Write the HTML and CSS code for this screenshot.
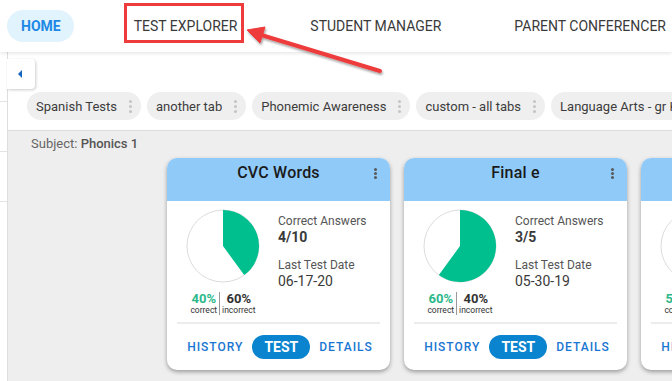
FILE: index.html
```html
<!DOCTYPE html>
<html lang="en">
<head>
    <meta charset="UTF-8">
    <title>Test Explorer</title>
    <link rel="stylesheet" href="styles.css">
</head>
<body>
    <div class="topbar">
        <a class="nav-item active">HOME</a>
        <a class="nav-item">TEST EXPLORER</a>
        <a class="nav-item">STUDENT MANAGER</a>
        <a class="nav-item">PARENT CONFERENCER</a>
    </div>

    <div class="layout">
        <div class="rail">
            <div class="rail-row"></div>
            <div class="rail-row"></div>
            <div class="rail-row"></div>
        </div>

        <div class="main">
            <div class="tabbar">
                <button class="collapse"><span class="tri"></span></button>
                <div class="chips">
                    <div class="chip">Spanish Tests <span class="kebab"></span></div>
                    <div class="chip">another tab <span class="kebab"></span></div>
                    <div class="chip">Phonemic Awareness <span class="kebab"></span></div>
                    <div class="chip">custom - all tabs <span class="kebab"></span></div>
                    <div class="chip">Language Arts - gr K <span class="kebab"></span></div>
                </div>
            </div>

            <div class="content">
                <div class="subject">Subject: <b>Phonics 1</b></div>
                <div class="cards">
                    <div class="card">
                        <div class="card-head">CVC Words <span class="kebab dark"></span></div>
                        <div class="card-body">
                            <div class="chart">
                                <svg width="74" height="74" viewBox="-37 -37 74 74">
                                    <circle r="36" fill="#fff" stroke="#dcdcdc" stroke-width="1"/>
                                    <path d="M0 0 L0 -36 A36 36 0 0 1 21.16 29.12 Z" fill="#00bf8f"/>
                                </svg>
                                <div class="pcts">
                                    <div class="pct"><b class="green">40%</b><span>correct</span></div>
                                    <div class="pct"><b>60%</b><span>incorrect</span></div>
                                </div>
                            </div>
                            <div class="info">
                                <div class="label">Correct Answers</div>
                                <div class="value bold">4/10</div>
                                <div class="label gap">Last Test Date</div>
                                <div class="value">06-17-20</div>
                            </div>
                        </div>
                        <div class="card-actions">
                            <a class="act">HISTORY</a>
                            <a class="act pill">TEST</a>
                            <a class="act">DETAILS</a>
                        </div>
                    </div>

                    <div class="card">
                        <div class="card-head">Final e <span class="kebab dark"></span></div>
                        <div class="card-body">
                            <div class="chart">
                                <svg width="74" height="74" viewBox="-37 -37 74 74">
                                    <circle r="36" fill="#fff" stroke="#dcdcdc" stroke-width="1"/>
                                    <path d="M0 0 L0 -36 A36 36 0 1 1 -21.16 29.12 Z" fill="#00bf8f"/>
                                </svg>
                                <div class="pcts">
                                    <div class="pct"><b class="green">60%</b><span>correct</span></div>
                                    <div class="pct"><b>40%</b><span>incorrect</span></div>
                                </div>
                            </div>
                            <div class="info">
                                <div class="label">Correct Answers</div>
                                <div class="value bold">3/5</div>
                                <div class="label gap">Last Test Date</div>
                                <div class="value">05-30-19</div>
                            </div>
                        </div>
                        <div class="card-actions">
                            <a class="act">HISTORY</a>
                            <a class="act pill">TEST</a>
                            <a class="act">DETAILS</a>
                        </div>
                    </div>

                    <div class="card">
                        <div class="card-head">Blends <span class="kebab dark"></span></div>
                        <div class="card-body">
                            <div class="chart">
                                <svg width="74" height="74" viewBox="-37 -37 74 74">
                                    <circle r="36" fill="#fff" stroke="#dcdcdc" stroke-width="1"/>
                                    <path d="M0 0 L0 -36 A36 36 0 0 1 0 36 Z" fill="#00bf8f"/>
                                </svg>
                                <div class="pcts">
                                    <div class="pct"><b class="green">50%</b><span>correct</span></div>
                                    <div class="pct"><b>50%</b><span>incorrect</span></div>
                                </div>
                            </div>
                            <div class="info">
                                <div class="label">Correct Answers</div>
                                <div class="value bold">5/10</div>
                                <div class="label gap">Last Test Date</div>
                                <div class="value">06-17-20</div>
                            </div>
                        </div>
                        <div class="card-actions">
                            <a class="act">HISTORY</a>
                            <a class="act pill">TEST</a>
                            <a class="act">DETAILS</a>
                        </div>
                    </div>
                </div>
            </div>
        </div>
    </div>

    <!-- annotation over the screenshot -->
    <div class="callout-box"></div>
    <svg class="callout-arrow" width="672" height="100" viewBox="0 0 672 100">
        <defs>
            <filter id="sh" x="-10%" y="-50%" width="120%" height="200%">
                <feDropShadow dx="1" dy="2" stdDeviation="1.2" flood-color="#000" flood-opacity="0.35"/>
            </filter>
        </defs>
        <g filter="url(#sh)" fill="#ee3b3b" stroke="#ee3b3b">
            <line x1="380" y1="71" x2="258" y2="34" stroke-width="4" stroke-linecap="round"/>
            <polygon points="247,30 265,27 260,43" stroke-width="1" stroke-linejoin="round"/>
        </g>
    </svg>
</body>
</html>
```

FILE: styles.css
```css
/* base */
body {
    margin: 0;
    font-family: Roboto, "Liberation Sans", Arial, sans-serif;
    color: #333;
    background: #eeeeee;
    width: 672px;
    height: 381px;
    overflow: hidden;
    position: relative;
}

/* top navigation */
.topbar {
    height: 52px;
    background: #fff;
    display: flex;
    align-items: center;
    padding-left: 7px;
    box-shadow: 0 1px 4px rgba(0, 0, 0, 0.12);
    position: relative;
    z-index: 2;
    white-space: nowrap;
}

.nav-item {
    height: 32px;
    line-height: 32px;
    padding: 0 16px;
    margin-right: 41px;
    font-size: 14px;
    color: #3a3a3a;
    border-radius: 16px;
    flex-shrink: 0;
}

.nav-item.active {
    background: #e1f3fd;
    color: #1e88e5;
    font-weight: 700;
    padding: 0 13px 0 14px;
    margin-right: 44px;
}

/* page layout */
.layout {
    display: flex;
    height: 329px;
}

.rail {
    width: 7px;
    flex-shrink: 0;
    background: #fff;
    border-right: 1px solid #dedede;
}

.rail-row {
    height: 49px;
    border-bottom: 1px solid #e2e2e2;
}

.main {
    flex: 1;
    min-width: 0;
}

/* tab bar */
.tabbar {
    background: #fff;
    height: 79px;
    border-bottom: 1px solid #dcdcdc;
    padding-top: 7px;
    box-sizing: border-box;
}

.collapse {
    display: flex;
    align-items: center;
    justify-content: center;
    width: 28px;
    height: 30px;
    margin-left: -1px;
    padding: 0;
    border: none;
    background: #fff;
    border-radius: 0 4px 4px 0;
    box-shadow: 1px 1px 3px rgba(0, 0, 0, 0.2);
}

.tri {
    width: 0;
    height: 0;
    border-top: 4px solid transparent;
    border-bottom: 4px solid transparent;
    border-right: 4px solid #1565c0;
    margin-left: -2px;
}

.chips {
    display: flex;
    gap: 6px;
    margin-top: 3px;
    padding-left: 19px;
    white-space: nowrap;
}

.chip {
    display: flex;
    align-items: center;
    height: 28px;
    padding: 0 9px 0 9px;
    background: #efefef;
    border-radius: 14px;
    font-size: 13px;
    color: #3c3c3c;
    flex-shrink: 0;
}

.kebab {
    display: inline-block;
    width: 3px;
    height: 3px;
    margin: 0 0 0 12px;
    border-radius: 50%;
    background: #c4c4c4;
    box-shadow: 0 -5px 0 #c4c4c4, 0 5px 0 #c4c4c4;
}

.kebab.dark {
    background: #5a5a5a;
    box-shadow: 0 -4px 0 #5a5a5a, 0 4px 0 #5a5a5a;
    position: absolute;
    right: 13px;
    top: 14px;
    margin: 0;
}

/* content */
.content {
    padding: 5px 0 0 23px;
}

.subject {
    font-size: 13px;
    line-height: 16px;
    color: #666;
}

.subject b {
    color: #555;
    font-weight: 500;
}

.cards {
    display: flex;
    gap: 14px;
    margin-top: 6px;
    padding-left: 136px;
}

.card {
    width: 223px;
    height: 212px;
    flex-shrink: 0;
    background: #fff;
    border-radius: 10px;
    overflow: hidden;
    box-shadow: 0 2px 4px rgba(0, 0, 0, 0.35);
    display: flex;
    flex-direction: column;
}

.card-head {
    position: relative;
    height: 43px;
    background: #90caf9;
    text-align: center;
    font-size: 16px;
    font-weight: 500;
    line-height: 30px;
    color: #1a1a1a;
    letter-spacing: 0.2px;
}

.card-body {
    display: flex;
    padding: 8px 0 0 19px;
    height: 113px;
}

.chart {
    width: 74px;
    display: flex;
    flex-direction: column;
    align-items: center;
}

.chart svg {
    display: block;
}

.pcts {
    display: flex;
    margin-top: 9px;
}

.pct {
    display: flex;
    flex-direction: column;
    align-items: center;
    padding: 0 2px;
}

.pct + .pct {
    border-left: 1px solid #999;
}

.pct b {
    font-size: 13px;
    line-height: 14px;
    color: #333;
}

.pct b.green {
    color: #2cb88a;
}

.pct span {
    font-size: 8.5px;
    line-height: 9px;
    color: #333;
}

.info {
    margin-left: 18px;
    padding-top: 5px;
}

.label {
    font-size: 12px;
    line-height: 15px;
    color: #555;
}

.label.gap {
    margin-top: 13px;
}

.value {
    font-size: 14px;
    line-height: 16px;
    color: #3a3a3a;
}

.value.bold {
    font-weight: 700;
}

.card-actions {
    margin: 0 10px;
    border-top: 2px solid #ececec;
    display: flex;
    align-items: center;
    justify-content: center;
    gap: 4px;
    height: 46px;
    padding-left: 3px;
}

.act {
    font-size: 12px;
    font-weight: 500;
    letter-spacing: 1px;
    color: #1976d2;
    padding: 0 5px;
}

.act.pill {
    background: #0a84cf;
    color: #fff;
    font-size: 14px;
    font-weight: 700;
    letter-spacing: 0;
    height: 24px;
    line-height: 24px;
    padding: 0 12px;
    border-radius: 12px;
}

/* annotation */
.callout-box {
    position: absolute;
    left: 124px;
    top: 3px;
    width: 114px;
    height: 34px;
    border: 3px solid #ee3b3b;
    z-index: 5;
}

.callout-arrow {
    position: absolute;
    left: 0;
    top: 0;
    z-index: 5;
}
```
